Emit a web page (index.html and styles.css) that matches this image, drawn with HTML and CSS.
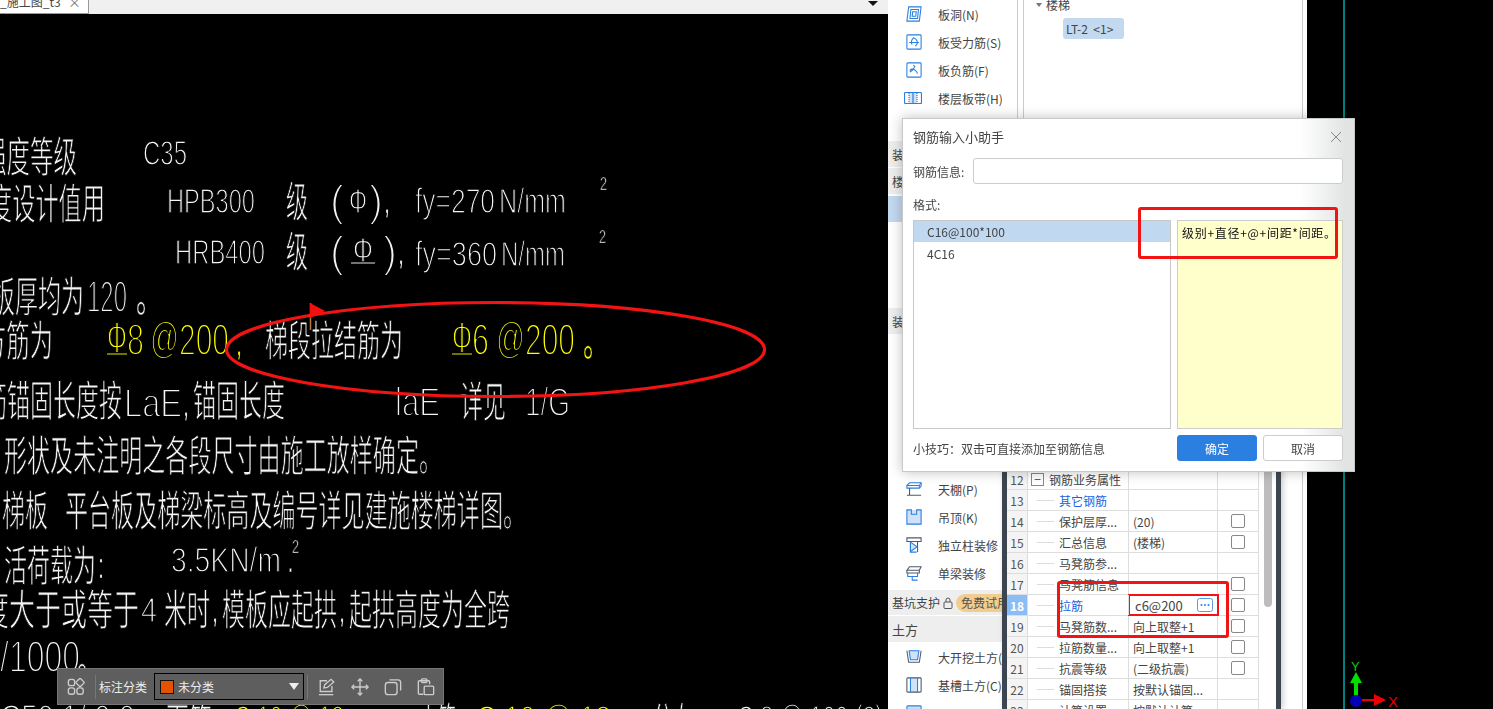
FILE: index.html
```html
<!DOCTYPE html>
<html lang="zh-CN">

<head>
    <meta charset="UTF-8">
    <title>钢筋输入小助手</title>
    <link rel="stylesheet" href="styles.css">
</head>

<body>
    <div class="app">
        <div class="drawing-area">
            <div class="tab-bar">
                <div class="tab"><span class="tab-name">_施工图_t3</span><span class="tab-close">×</span></div>
                <span class="tab-more"></span>
            </div>

            <div class="cad-view">
                <svg class="cad-svg" viewBox="0 14 888 695" xmlns="http://www.w3.org/2000/svg">
                    <text class="cn" x="-17" y="172" textLength="94" lengthAdjust="spacingAndGlyphs">强度等级</text>
                    <text class="en" x="143" y="165" textLength="44" lengthAdjust="spacingAndGlyphs">C35</text>

                    <text class="cn" x="-11" y="219" textLength="116" lengthAdjust="spacingAndGlyphs">度设计值用</text>
                    <text class="en" x="167" y="213" textLength="88" lengthAdjust="spacingAndGlyphs">HPB300</text>
                    <text class="cn" x="286" y="217" textLength="22" lengthAdjust="spacingAndGlyphs">级</text>
                    <text class="en tall" x="330" y="216" textLength="14" lengthAdjust="spacingAndGlyphs">(</text>
                    <text class="en" x="349" y="213" textLength="18" lengthAdjust="spacingAndGlyphs">Φ</text>
                    <text class="en tall" x="369" y="216" textLength="14" lengthAdjust="spacingAndGlyphs">)</text>
                    <text class="en mark" x="384" y="213" textLength="6" lengthAdjust="spacingAndGlyphs">,</text>
                    <text class="en" x="415" y="213" textLength="80" lengthAdjust="spacingAndGlyphs">fy=270</text>
                    <text class="en" x="499" y="213" textLength="67" lengthAdjust="spacingAndGlyphs">N/mm</text>
                    <text class="en small" x="600" y="190" textLength="7" lengthAdjust="spacingAndGlyphs">2</text>

                    <text class="en" x="175" y="264" textLength="90" lengthAdjust="spacingAndGlyphs">HRB400</text>
                    <text class="cn" x="286" y="267" textLength="22" lengthAdjust="spacingAndGlyphs">级</text>
                    <text class="en tall" x="330" y="267" textLength="14" lengthAdjust="spacingAndGlyphs">(</text>
                    <text class="en" x="353" y="262" textLength="20" lengthAdjust="spacingAndGlyphs">Φ</text>
                    <line class="bar" x1="351" y1="263" x2="375" y2="263"></line>
                    <text class="en tall" x="383" y="267" textLength="14" lengthAdjust="spacingAndGlyphs">)</text>
                    <text class="en mark" x="398" y="264" textLength="6" lengthAdjust="spacingAndGlyphs">,</text>
                    <text class="en" x="415" y="266" textLength="82" lengthAdjust="spacingAndGlyphs">fy=360</text>
                    <text class="en" x="501" y="266" textLength="64" lengthAdjust="spacingAndGlyphs">N/mm</text>
                    <text class="en small" x="599" y="243" textLength="7" lengthAdjust="spacingAndGlyphs">2</text>

                    <text class="cn" x="-8" y="312" textLength="92" lengthAdjust="spacingAndGlyphs">板厚均为</text>
                    <text class="en big" x="87" y="312" textLength="40" lengthAdjust="spacingAndGlyphs">120</text>
                    <text class="cn stop" x="136" y="312" textLength="26" lengthAdjust="spacingAndGlyphs">。</text>

                    <text class="cn" x="-17" y="356" textLength="70" lengthAdjust="spacingAndGlyphs">方筋为</text>
                    <text class="en tall yellow" x="107" y="353" textLength="20" lengthAdjust="spacingAndGlyphs">Φ</text>
                    <line class="bar yellow-bar" x1="107" y1="354" x2="127" y2="354"></line>
                    <text class="en big yellow" x="127" y="355" textLength="17" lengthAdjust="spacingAndGlyphs">8</text>
                    <text class="en big yellow" x="150" y="353" textLength="29" lengthAdjust="spacingAndGlyphs">@</text>
                    <text class="en big yellow" x="179" y="355" textLength="50" lengthAdjust="spacingAndGlyphs">200</text>
                    <text class="en mark yellow" x="236" y="355" textLength="6" lengthAdjust="spacingAndGlyphs">,</text>
                    <text class="cn" x="265" y="356" textLength="138" lengthAdjust="spacingAndGlyphs">梯段拉结筋为</text>
                    <text class="en tall yellow" x="452" y="353" textLength="20" lengthAdjust="spacingAndGlyphs">Φ</text>
                    <line class="bar yellow-bar" x1="452" y1="354" x2="472" y2="354"></line>
                    <text class="en big yellow" x="472" y="355" textLength="17" lengthAdjust="spacingAndGlyphs">6</text>
                    <text class="en big yellow" x="496" y="353" textLength="29" lengthAdjust="spacingAndGlyphs">@</text>
                    <text class="en big yellow" x="525" y="355" textLength="50" lengthAdjust="spacingAndGlyphs">200</text>
                    <text class="cn stop yellow" x="583" y="356" textLength="26" lengthAdjust="spacingAndGlyphs">。</text>

                    <text class="cn" x="-16" y="416" textLength="138" lengthAdjust="spacingAndGlyphs">筋锚固长度按</text>
                    <text class="en mid" x="124" y="417" textLength="58" lengthAdjust="spacingAndGlyphs">LaE</text>
                    <text class="en mark" x="183" y="416" textLength="6" lengthAdjust="spacingAndGlyphs">,</text>
                    <text class="cn" x="193" y="416" textLength="92" lengthAdjust="spacingAndGlyphs">锚固长度</text>
                    <text class="en mid" x="395" y="416" textLength="45" lengthAdjust="spacingAndGlyphs">laE</text>
                    <text class="cn" x="460" y="417" textLength="46" lengthAdjust="spacingAndGlyphs">详见</text>
                    <text class="en mid" x="525" y="416" textLength="45" lengthAdjust="spacingAndGlyphs">1/G</text>

                    <text class="cn" x="4" y="471" textLength="438" lengthAdjust="spacingAndGlyphs">形状及未注明之各段尺寸由施工放样确定。</text>
                    <text class="cn" x="2" y="526" textLength="46" lengthAdjust="spacingAndGlyphs">梯板</text>
                    <text class="cn" x="65" y="526" textLength="461" lengthAdjust="spacingAndGlyphs">平台板及梯梁标高及编号详见建施楼梯详图。</text>

                    <text class="cn" x="4" y="581" textLength="92" lengthAdjust="spacingAndGlyphs">活荷载为</text>
                    <text class="en mark" x="98" y="578" textLength="6" lengthAdjust="spacingAndGlyphs">:</text>
                    <text class="en" x="171" y="572" textLength="110" lengthAdjust="spacingAndGlyphs">3.5KN/m</text>
                    <text class="en mark" x="288" y="572" textLength="5" lengthAdjust="spacingAndGlyphs">.</text>
                    <text class="en small" x="292" y="553" textLength="7" lengthAdjust="spacingAndGlyphs">2</text>

                    <text class="cn" x="-17" y="625" textLength="156" lengthAdjust="spacingAndGlyphs">度大于或等于</text>
                    <text class="en" x="141" y="622" textLength="16" lengthAdjust="spacingAndGlyphs">4</text>
                    <text class="cn" x="164" y="625" textLength="46" lengthAdjust="spacingAndGlyphs">米时</text>
                    <text class="en mark" x="212" y="622" textLength="6" lengthAdjust="spacingAndGlyphs">,</text>
                    <text class="cn" x="222" y="625" textLength="115" lengthAdjust="spacingAndGlyphs">模板应起拱</text>
                    <text class="en mark" x="339" y="622" textLength="6" lengthAdjust="spacingAndGlyphs">,</text>
                    <text class="cn" x="349" y="625" textLength="161" lengthAdjust="spacingAndGlyphs">起拱高度为全跨</text>

                    <text class="en big" x="0" y="672" textLength="80" lengthAdjust="spacingAndGlyphs">/1000</text>
                    <text class="cn stop" x="77" y="674" textLength="26" lengthAdjust="spacingAndGlyphs">。</text>

                    <text class="en" x="0" y="729" textLength="135" lengthAdjust="spacingAndGlyphs">C50 1/ 0 0</text>
                    <text class="cn" x="166" y="738" textLength="46" lengthAdjust="spacingAndGlyphs">面筋</text>
                    <text class="en yellow" x="234" y="730" textLength="110" lengthAdjust="spacingAndGlyphs">C 10 @ 12</text>
                    <text class="cn" x="420" y="738" textLength="36" lengthAdjust="spacingAndGlyphs">上筋</text>
                    <text class="en yellow" x="476" y="730" textLength="135" lengthAdjust="spacingAndGlyphs">C 10 @ 12</text>
                    <text class="cn" x="652" y="738" textLength="42" lengthAdjust="spacingAndGlyphs">分布</text>
                    <text class="en" x="737" y="730" textLength="146" lengthAdjust="spacingAndGlyphs">C 8 @ 100 (2)</text>

                    <ellipse class="markup" cx="495.5" cy="349.5" rx="269" ry="47"></ellipse>
                    <line class="flag-pole" x1="310.5" y1="303" x2="310.5" y2="330"></line>
                    <polygon class="flag" points="310,303 325,311 310,318"></polygon>
                </svg>

                <div class="mark-bar">
                    <svg class="bar-icon" viewBox="0 0 20 20">
                        <rect x="1.5" y="1.5" width="7" height="7" rx="2.5"></rect>
                        <rect x="11" y="1.5" width="7" height="7" rx="1" transform="rotate(45 14.5 5)"></rect>
                        <rect x="1.5" y="11" width="7" height="7" rx="2.5"></rect>
                        <rect x="11" y="11" width="7" height="7" rx="2.5"></rect>
                    </svg>
                    <span class="bar-sep"></span>
                    <span class="bar-label">标注分类</span>
                    <div class="bar-select">
                        <span class="swatch"></span>
                        <span class="select-text">未分类</span>
                        <span class="select-arrow"></span>
                    </div>
                    <span class="bar-sep"></span>
                    <div class="bar-tools">
                        <svg class="bar-icon" viewBox="0 0 20 20">
                            <path d="M10 3H2.500v12h13V9"></path>
                            <path d="M6.500 11l1-3.500 7-6 3 3-7 6z"></path>
                            <path d="M1 18.500h16"></path>
                        </svg>
                        <svg class="bar-icon" viewBox="0 0 20 20">
                            <path d="M10 1v18M1 10h18"></path>
                            <path d="M7.500 3.500L10 1l2.500 2.500M7.500 16.500L10 19l2.500-2.500M3.500 7.500L1 10l2.500 2.500M16.500 7.500L19 10l-2.500 2.500"></path>
                        </svg>
                        <svg class="bar-icon" viewBox="0 0 20 20">
                            <rect x="1.500" y="5" width="13" height="13.500" rx="3"></rect>
                            <path d="M6 2h9.500a3 3 0 0 1 3 3v9"></path>
                        </svg>
                        <svg class="bar-icon" viewBox="0 0 20 20">
                            <path d="M7 18H2.500a1 1 0 0 1-1-1V4a1 1 0 0 1 1-1H13a1 1 0 0 1 1 1v3"></path>
                            <rect x="5" y="1" width="6" height="4" rx="1"></rect>
                            <rect x="8" y="9" width="10.500" height="9.500" rx="1"></rect>
                        </svg>
                    </div>
                </div>
            </div>
        </div>

        <div class="side-panel">
            <div class="nav-list">
                <div class="nav-item">
                    <svg class="nav-icon" viewBox="0 0 18 18"><path d="M3 1h14l-2 16H1zM5.500 4h8.500l-1 10H4.500z"></path><path d="M7.500 6.500h4l-.5 5H7z"></path></svg>
                    <span>板洞(N)</span>
                </div>
                <div class="nav-item">
                    <svg class="nav-icon" viewBox="0 0 18 18"><rect x="1" y="1" width="16" height="16" rx="1"></rect><path d="M3.500 9.500h11M9 4c-3 2-4 6-2 8M9 4.500c3 1 5 5 3 7.500l-1.500 1.500"></path></svg>
                    <span>板受力筋(S)</span>
                </div>
                <div class="nav-item">
                    <svg class="nav-icon" viewBox="0 0 18 18"><rect x="1" y="1" width="16" height="16" rx="1"></rect><path d="M8 3.500l2 1.500c-1 3-3 5-5 6-1-2 0-3 2-3s5 2 6 5"></path></svg>
                    <span>板负筋(F)</span>
                </div>
                <div class="nav-item">
                    <svg class="nav-icon nav-wide" viewBox="0 0 18 12"><rect class="tint" x="5" y="1" width="8" height="10"></rect><rect x=".500" y=".500" width="17" height="11" rx="1"></rect><path d="M5 1v10M13 1v10" stroke-dasharray="1 1"></path><path d="M9 1v10"></path></svg>
                    <span>楼层板带(H)</span>
                </div>
                <div class="nav-item nav-hidden"></div>

                <div class="nav-group nav-group-a"><span>装</span></div>
                <div class="nav-group"><span>楼</span></div>
                <div class="nav-selected"></div>
                <div class="nav-group nav-group-b"><span>装</span></div>

                <div class="nav-item nav-lower">
                    <svg class="nav-icon" viewBox="0 0 18 18"><path d="M1 5l3-3h13v4l-2 2H1z"></path><path d="M1 5h14v3M15 5l2-3"></path><path class="ink" d="M4 8v8M1 16h16"></path></svg>
                    <span>天棚(P)</span>
                </div>
                <div class="nav-item">
                    <svg class="nav-icon" viewBox="0 0 18 18"><rect class="tint" x="1" y="1" width="16" height="16"></rect><path d="M1 1h5v5h6V1h5v16H1z"></path></svg>
                    <span>吊顶(K)</span>
                </div>
                <div class="nav-item">
                    <svg class="nav-icon" viewBox="0 0 18 18"><path class="ink" d="M1 1h16v4H1z"></path><path class="ink" d="M5 5v12M13 5v12"></path><path class="tint" d="M5.500 6l7 5-7 5z"></path><path d="M5 5v12h7"></path><path d="M5.500 6l7 5-7 5"></path></svg>
                    <span>独立柱装修</span>
                </div>
                <div class="nav-item">
                    <svg class="nav-icon" viewBox="0 0 18 18"><path class="ink" d="M1 6l3-4h13l-2 4zM1 6v3h14V6"></path><path d="M2 9v4h11V9M7 13v4h6"></path></svg>
                    <span>单梁装修</span>
                </div>
                <div class="nav-group nav-group-c">
                    <span>基坑支护</span>
                    <svg class="lock" viewBox="0 0 10 12"><rect x="1" y="5" width="8" height="6.500" rx="1"></rect><path d="M3 5V3a2 2 0 0 1 4 0v2"></path></svg>
                    <span class="trial">免费试用</span>
                </div>
                <div class="nav-group nav-group-d"><span>土方</span></div>
                <div class="nav-item nav-earth">
                    <svg class="nav-icon" viewBox="0 0 18 18"><path class="tint" d="M3.500 2h11l-1.500 10H5z"></path><path d="M3.500 2h11l-1.500 10H5z"></path><path class="ink" d="M1 2l2 13h12l2-13"></path></svg>
                    <span>大开挖土方(</span>
                </div>
                <div class="nav-item">
                    <svg class="nav-icon" viewBox="0 0 18 18"><rect class="tint" x="5" y="1" width="8" height="16"></rect><rect class="ink" x="1" y="1" width="16" height="16" rx="1"></rect><path d="M5 1v16M13 1v16"></path></svg>
                    <span>基槽土方(C)</span>
                </div>
                <div class="nav-item">
                    <svg class="nav-icon" viewBox="0 0 18 18"><rect class="tint" x="1" y="1" width="16" height="16" rx="1"></rect><rect x="1" y="1" width="16" height="16" rx="1"></rect><path d="M1 5h16"></path></svg>
                </div>
            </div>

            <div class="tree-panel">
                <div class="tree-root"><span class="tree-arrow"></span>楼梯</div>
                <div class="tree-leaf">LT-2 &nbsp;&lt;1&gt;</div>
            </div>
        </div>

        <div class="right-view"></div>
    </div>

    <div class="prop-window">
        <div class="prop-table">
            <div class="prop-row">
                <div class="cell cell-num">12</div>
                <div class="cell cell-name cell-group"><span class="minus">−</span>钢筋业务属性</div>
                <div class="cell cell-value"></div>
                <div class="cell cell-check"></div>
            </div>
            <div class="prop-row">
                <div class="cell cell-num">13</div>
                <div class="cell cell-name cell-link">其它钢筋</div>
                <div class="cell cell-value"></div>
                <div class="cell cell-check"></div>
            </div>
            <div class="prop-row">
                <div class="cell cell-num">14</div>
                <div class="cell cell-name">保护层厚...</div>
                <div class="cell cell-value">(20)</div>
                <div class="cell cell-check"><span class="box"></span></div>
            </div>
            <div class="prop-row">
                <div class="cell cell-num">15</div>
                <div class="cell cell-name">汇总信息</div>
                <div class="cell cell-value">(楼梯)</div>
                <div class="cell cell-check"><span class="box"></span></div>
            </div>
            <div class="prop-row">
                <div class="cell cell-num">16</div>
                <div class="cell cell-name">马凳筋参...</div>
                <div class="cell cell-value"></div>
                <div class="cell cell-check"></div>
            </div>
            <div class="prop-row">
                <div class="cell cell-num">17</div>
                <div class="cell cell-name">马凳筋信息</div>
                <div class="cell cell-value"></div>
                <div class="cell cell-check"><span class="box"></span></div>
            </div>
            <div class="prop-row">
                <div class="cell cell-num cell-num-active">18</div>
                <div class="cell cell-name cell-link">拉筋</div>
                <div class="cell cell-value cell-edit">
                    <span>c6@200</span>
                    <svg class="more-btn" viewBox="0 0 16 14"><rect x=".500" y=".500" width="15" height="13" rx="2"></rect><circle cx="4.500" cy="7" r="1"></circle><circle cx="8" cy="7" r="1"></circle><circle cx="11.500" cy="7" r="1"></circle></svg>
                </div>
                <div class="cell cell-check"><span class="box"></span></div>
            </div>
            <div class="prop-row">
                <div class="cell cell-num">19</div>
                <div class="cell cell-name">马凳筋数...</div>
                <div class="cell cell-value">向上取整+1</div>
                <div class="cell cell-check"><span class="box"></span></div>
            </div>
            <div class="prop-row">
                <div class="cell cell-num">20</div>
                <div class="cell cell-name">拉筋数量...</div>
                <div class="cell cell-value">向上取整+1</div>
                <div class="cell cell-check"><span class="box"></span></div>
            </div>
            <div class="prop-row">
                <div class="cell cell-num">21</div>
                <div class="cell cell-name">抗震等级</div>
                <div class="cell cell-value">(二级抗震)</div>
                <div class="cell cell-check"><span class="box"></span></div>
            </div>
            <div class="prop-row">
                <div class="cell cell-num">22</div>
                <div class="cell cell-name">锚固搭接</div>
                <div class="cell cell-value">按默认锚固...</div>
                <div class="cell cell-check"></div>
            </div>
            <div class="prop-row">
                <div class="cell cell-num">23</div>
                <div class="cell cell-name">计算设置</div>
                <div class="cell cell-value">按默认计算...</div>
                <div class="cell cell-check"></div>
            </div>
        </div>
        <div class="prop-scroll"><div class="prop-thumb"></div></div>
        <div class="red-box red-outer"></div>
    </div>

    <div class="dialog">
        <div class="dialog-title">
            <span>钢筋输入小助手</span>
            <svg class="dialog-close" viewBox="0 0 12 12"><path d="M1 1l10 10M11 1L1 11"></path></svg>
        </div>
        <div class="info-row">
            <label>钢筋信息:</label>
            <input class="info-input" type="text">
        </div>
        <div class="format-label">格式:</div>
        <div class="format-body">
            <div class="format-list">
                <div class="format-item format-item-on">C16@100*100</div>
                <div class="format-item">4C16</div>
            </div>
            <div class="format-note">级别+直径+@+间距*间距。</div>
        </div>
        <div class="dialog-foot">
            <span class="tip">小技巧：双击可直接添加至钢筋信息</span>
            <div class="dialog-btns">
                <button class="btn btn-ok">确定</button>
                <button class="btn">取消</button>
            </div>
        </div>
        <div class="red-box red-note"></div>
    </div>

    <svg class="axis" viewBox="0 0 60 60">
        <text class="axis-y" x="5" y="11">Y</text>
        <path class="axis-green" d="M10 12l6 11h-4v16H8V23H4z"></path>
        <path class="axis-red" d="M16 39h12v-5l12 6-12 6v-5H16z"></path>
        <circle class="axis-blue" cx="10" cy="41" r="6"></circle>
        <text class="axis-x" x="42" y="47">X</text>
    </svg>
</body>

</html>
```

FILE: styles.css
```css
* {
    margin: 0;
    padding: 0;
    box-sizing: border-box;
}

html,
body {
    width: 1493px;
    height: 709px;
    overflow: hidden;
    background-color: #000;
}

body {
    position: relative;
    font-family: "Noto Sans CJK SC", "Noto Sans", sans-serif;
    font-size: 12px;
    color: #444;
}

.app {
    display: flex;
    height: 709px;
}

/* drawing on the left */
.drawing-area {
    width: 888px;
    display: flex;
    flex-direction: column;
}

.tab-bar {
    height: 14px;
    background-color: #f0f0f0;
    display: flex;
    justify-content: space-between;
    flex-shrink: 0;
}

.tab {
    width: 89px;
    height: 14px;
    background-color: #fff;
    border-right: 1px solid #999;
    border-bottom: 1px solid #999;
    display: flex;
    justify-content: space-between;
    padding-right: 7px;
    line-height: 3px;
    overflow: hidden;
}

.tab-close {
    color: #777;
    font-size: 13px;
}

.tab-more {
    width: 0;
    height: 0;
    margin: 1px 10px 0 0;
    border-left: 5px solid transparent;
    border-right: 5px solid transparent;
    border-top: 5px solid #111;
}

.cad-view {
    position: relative;
    flex: 1;
    overflow: hidden;
}

.cad-svg {
    display: block;
    width: 888px;
    height: 695px;
    will-change: transform;
}

.cad-svg text {
    fill: #f4f4f4;
    stroke: #000;
}

.cad-svg .cn {
    font-family: "Noto Sans CJK SC", sans-serif;
    font-size: 42px;
    stroke-width: 1px;
}

.cad-svg .stop {
    stroke-width: .5px;
}

.cad-svg .en {
    font-family: "Liberation Sans", sans-serif;
    font-size: 35px;
    stroke-width: 1.400px;
}

.cad-svg .mid {
    font-size: 40px;
    stroke-width: 1.800px;
}

.cad-svg .big {
    font-size: 45px;
    stroke-width: 2px;
}

.cad-svg .tall {
    font-size: 44px;
    stroke-width: 1.800px;
}

.cad-svg .small {
    font-size: 19px;
    stroke-width: .6px;
}

.cad-svg .mark {
    stroke-width: .4px;
}

.cad-svg .yellow {
    fill: #ffff00;
}

.bar {
    stroke: #e6e6e6;
    stroke-width: 1;
}

.yellow-bar {
    stroke: #e6e600;
}

.markup {
    fill: none;
    stroke: #f21414;
    stroke-width: 3.200;
}

.flag {
    fill: #f51010;
}

.flag-pole {
    stroke: #b87a3c;
    stroke-width: 1.500;
}

.mark-bar {
    position: absolute;
    left: 57px;
    bottom: 4px;
    width: 387px;
    height: 37px;
    background-color: #5e5e5e;
    border: 1px solid #777;
    display: flex;
    align-items: center;
    padding-left: 9px;
    color: #eee;
}

.bar-icon {
    width: 18px;
    height: 18px;
    fill: none;
    stroke: #ccc;
    stroke-width: 1.500;
    flex-shrink: 0;
}

.bar-sep {
    width: 1px;
    height: 24px;
    background-color: #777;
    margin-left: 10px;
    flex-shrink: 0;
}

.bar-label {
    margin-left: 3px;
    width: 50px;
    white-space: nowrap;
}

.bar-select {
    margin-left: 5px;
    width: 150px;
    height: 27px;
    border: 1px solid #000;
    display: flex;
    align-items: center;
    padding: 0 4px 0 5px;
}

.bar-select + .bar-sep {
    margin-left: 3px;
}

.swatch {
    width: 14px;
    height: 14px;
    background-color: #e65100;
    border: 1px solid #111;
}

.select-text {
    margin-left: 4px;
    flex: 1;
}

.select-arrow {
    width: 0;
    height: 0;
    border-left: 5px solid transparent;
    border-right: 5px solid transparent;
    border-top: 7px solid #eee;
}

.bar-tools {
    display: flex;
    gap: 15px;
    margin-left: 10px;
}

/* element list and tree */
.side-panel {
    width: 419px;
    height: 709px;
    background-color: #fff;
    display: flex;
    flex-shrink: 0;
}

.nav-list {
    width: 130px;
    border-right: 1px solid #ccc;
    display: flex;
    flex-direction: column;
    align-items: stretch;
    flex-shrink: 0;
}

.nav-item {
    height: 28px;
    display: flex;
    align-items: center;
    padding-left: 18px;
    gap: 16px;
    white-space: nowrap;
    flex-shrink: 0;
    overflow: hidden;
}

.nav-hidden {
    height: 28px;
}

.nav-icon {
    width: 16px;
    height: 16px;
    fill: none;
    stroke: #2b7fe0;
    stroke-width: 1.200;
    flex-shrink: 0;
}

.nav-wide {
    width: 18px;
    margin-left: -2px;
}

.nav-icon .tint {
    fill: #cfe2f8;
    stroke: none;
}

.nav-icon .ink {
    stroke: #50596a;
}

.nav-group {
    height: 26px;
    background-color: #eee;
    display: flex;
    align-items: center;
    padding-left: 4px;
    flex-shrink: 0;
    white-space: nowrap;
    overflow: hidden;
}

.nav-group-a {
    margin-top: 1px;
    margin-bottom: 1px;
}

.nav-selected {
    height: 26px;
    margin-top: 2px;
    background-color: #c3d9f0;
    flex-shrink: 0;
}

.nav-group-b {
    margin-top: 86px;
}

.nav-lower {
    margin-top: 141px;
}

.nav-group-c {
    height: 25px;
    margin-top: 3px;
}

.lock {
    width: 10px;
    height: 12px;
    fill: none;
    stroke: #555;
    margin: 0 3px;
    flex-shrink: 0;
}

.trial {
    background-color: #f2cd8e;
    border-radius: 9px;
    padding: 0 5px;
    height: 18px;
    line-height: 18px;
    color: #555;
}

.nav-group-d {
    margin-top: 1px;
    font-size: 13px;
}

.nav-earth {
    margin-top: 1px;
}

.tree-panel {
    width: 280px;
    margin-left: 5px;
    border-left: 1px solid #ccc;
    border-right: 1px solid #ccc;
    padding-left: 12px;
    flex-shrink: 0;
}

.tree-root {
    height: 10px;
    line-height: 10px;
    display: flex;
    align-items: center;
    gap: 4px;
}

.tree-arrow {
    width: 0;
    height: 0;
    border-left: 3px solid transparent;
    border-right: 3px solid transparent;
    border-top: 4px solid #777;
}

.tree-leaf {
    width: 61px;
    height: 21px;
    line-height: 21px;
    margin: 8px 0 0 27px;
    padding-left: 3px;
    background-color: #c3d9f0;
    border-radius: 3px;
    white-space: nowrap;
}

/* black view with axis on the right */
.right-view {
    flex: 1;
    margin-left: 36px;
    border-left: 2px solid #008080;
}

.axis {
    position: absolute;
    left: 1346px;
    top: 660px;
    width: 60px;
    height: 60px;
}

.axis-y {
    fill: #10c810;
    font-family: "Liberation Sans", sans-serif;
    font-size: 13px;
}

.axis-x {
    fill: #e00000;
    font-family: "Liberation Sans", sans-serif;
    font-size: 15px;
}

.axis-green {
    fill: #00e000;
}

.axis-red {
    fill: #f00000;
}

.axis-blue {
    fill: #0000b4;
}

/* floating property grid */
.prop-window {
    position: absolute;
    left: 1002px;
    top: 469px;
    width: 279px;
    height: 240px;
    background-color: #fff;
    border-left: 5px solid #3d4650;
    border-right: 5px solid #3d4650;
    display: flex;
    box-shadow: 2px 0 6px rgba(0, 0, 0, .2);
}

.prop-table {
    width: 252px;
    flex-shrink: 0;
}

.prop-row {
    display: flex;
    height: 21px;
    border-bottom: 1px solid #ddd;
}

.cell {
    display: flex;
    align-items: center;
    border-right: 1px solid #ddd;
    white-space: nowrap;
    overflow: hidden;
}

.cell-num {
    width: 21px;
    justify-content: center;
    background-color: #f4f4f4;
    color: #555;
}

.cell-num-active {
    background-color: #8abcf5;
    color: #fff;
    font-weight: bold;
}

.cell-name {
    width: 101px;
    padding-left: 31px;
    position: relative;
}

.cell-name::before {
    content: "";
    position: absolute;
    left: 9px;
    top: 10px;
    width: 17px;
    height: 1px;
    background-color: #ddd;
}

.cell-group {
    padding-left: 21px;
}

.cell-group::before {
    display: none;
}

.minus {
    position: absolute;
    left: 3px;
    top: 4px;
    width: 13px;
    height: 13px;
    border: 1px solid #888;
    line-height: 10px;
    text-align: center;
}

.cell-link {
    color: #1a5fe0;
}

.cell-value {
    width: 89px;
    padding-left: 4px;
}

.cell-edit {
    padding: 0 4px 0 6px;
    font-size: 13px;
    outline: 2px solid #f21414;
    outline-offset: -1px;
    justify-content: space-between;
}

.more-btn {
    width: 16px;
    height: 14px;
    fill: none;
    stroke: #5a9be8;
    flex-shrink: 0;
}

.more-btn circle {
    fill: #2b7fe0;
    stroke: none;
}

.cell-check {
    width: 41px;
    justify-content: center;
}

.box {
    width: 14px;
    height: 14px;
    border: 1px solid #888;
    border-radius: 2px;
}

.prop-scroll {
    flex: 1;
    background-color: #fff;
    padding: 0 1px 0 5px;
}

.prop-thumb {
    height: 138px;
    width: 8px;
    background-color: #bdbdbd;
    border-radius: 0 0 4px 4px;
}

.red-box {
    position: absolute;
    border: 3px solid #f21414;
    border-radius: 3px;
    pointer-events: none;
}

.red-outer {
    left: 50px;
    top: 112px;
    width: 172px;
    height: 57px;
}

/* rebar input dialog */
.dialog {
    position: absolute;
    left: 902px;
    top: 118px;
    width: 453px;
    height: 354px;
    background: linear-gradient(to right, #fff 88%, #e2e4e4 98%);
    border: 1px solid #c8c8c8;
    box-shadow: 0 0 12px rgba(0, 0, 0, .25);
    padding: 0 11px 0 10px;
    display: flex;
    flex-direction: column;
}

.dialog-title {
    height: 39px;
    padding: 0 1px 4px 0;
    display: flex;
    align-items: center;
    justify-content: space-between;
    font-size: 13px;
}

.dialog-close {
    width: 12px;
    height: 12px;
    fill: none;
    stroke: #888;
}

.info-row {
    height: 26px;
    display: flex;
    align-items: center;
    gap: 9px;
}

.info-input {
    flex: 1;
    height: 26px;
    border: 1px solid #ccc;
    border-radius: 3px;
    background-color: #fff;
}

.format-label {
    height: 36px;
    line-height: 41px;
}

.format-body {
    display: flex;
    gap: 6px;
    height: 209px;
}

.format-list {
    width: 258px;
    background-color: #fff;
    border: 1px solid #c8c8c8;
}

.format-item {
    height: 22px;
    line-height: 24px;
    padding-left: 13px;
}

.format-item-on {
    background-color: #c0d8f0;
    height: 21px;
    line-height: 22px;
}

.format-note {
    flex: 1;
    background-color: #ffffcc;
    border: 1px solid #ccc;
    padding: 3px 4px;
    color: #111;
    white-space: nowrap;
    letter-spacing: .7px;
}

.dialog-foot {
    display: flex;
    justify-content: space-between;
    align-items: center;
    margin-top: 6px;
}

.dialog-btns {
    display: flex;
    gap: 6px;
}

.btn {
    width: 80px;
    height: 26px;
    font-family: inherit;
    font-size: 12px;
    color: #444;
    background-color: #fff;
    border: 1px solid #ccc;
    border-radius: 3px;
}

.btn-ok {
    background-color: #2b7fe0;
    border-color: #2b7fe0;
    color: #fff;
}

.red-note {
    left: 235px;
    top: 88px;
    width: 200px;
    height: 52px;
}
```
